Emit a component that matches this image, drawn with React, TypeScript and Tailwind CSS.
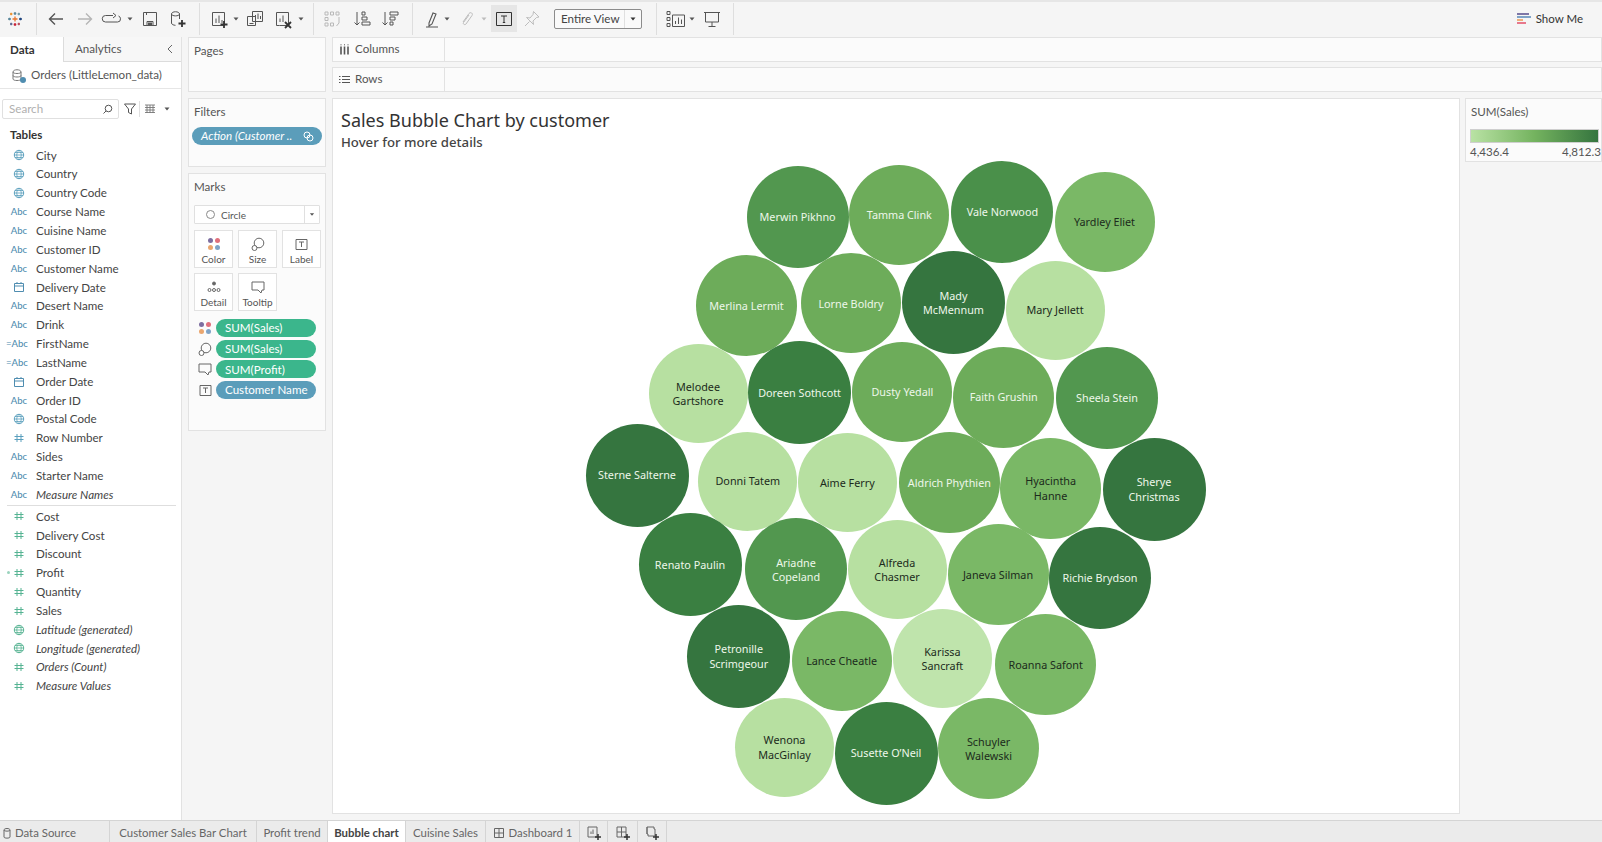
import type { ReactNode } from 'react';

const Ic = ({ w = 20, h = 20, className = '', children }: { w?: number; h?: number; className?: string; children: ReactNode }) => (
  <svg width={w} height={h} viewBox={`0 0 ${w} ${h}`} fill="none" stroke="currentColor" strokeWidth="1" className={`shrink-0 ${className}`}>
    {children}
  </svg>
);

const Caret = ({ className = '' }: { className?: string }) => (
  <svg width="8" height="20" viewBox="0 0 8 20" className={`shrink-0 ${className}`}>
    <path d="M1.5 8.5h5L4 11.5z" fill="currentColor" />
  </svg>
);

const Sep = ({ className = '' }: { className?: string }) => <div className={`h-[32px] w-px shrink-0 bg-[#dedede] ${className}`} />;

const Logo = () => (
  <svg width="16" height="16" viewBox="0 0 16 16" className="ml-[7px] shrink-0" strokeWidth="1.3" fill="none">
    <path d="M8 5.5v5M5.500 8h5" stroke="#e8762d" />
    <path d="M8 1v3M6.700 2.500h2.600" stroke="#5b879b" />
    <path d="M8 12v3M6.700 13.500h2.600" stroke="#c72035" />
    <path d="M1 8h3M2.500 6.700v2.600" stroke="#59879b" />
    <path d="M12 8h3M13.500 6.700v2.600" stroke="#1f447e" />
    <path d="M3 3h2.400M4.200 1.800v2.400" stroke="#eb912b" />
    <path d="M10.600 3H13M11.800 1.800v2.400" stroke="#7099a6" />
    <path d="M3 13h2.400M4.200 11.800v2.400" stroke="#5c6692" />
    <path d="M10.600 13H13M11.800 11.800v2.400" stroke="#b74957" />
  </svg>
);

const Toolbar = () => (
  <div className="flex h-[37px] shrink-0 items-center border-t-2 border-[#e6e6e6] bg-[#f5f5f5] pb-[2px] text-[#555]">
    <Logo />
    <Sep className="ml-[13px]" />
    <Ic className="ml-[9px]"><path d="M17 10H3.500M9 4.500 3.500 10 9 15.500" strokeWidth="1.400" /></Ic>
    <Ic className="ml-[9px] text-[#b5b5b5]"><path d="M3 10h13.500M11 4.500l5.500 5.500-5.500 5.500" strokeWidth="1.400" /></Ic>
    <Ic w={24} className="ml-[5px]"><path d="M13 6.500H5.500a3 3 0 0 0 0 6.500h12a3 3 0 0 0 3-3.200 3 3 0 0 0-2-2.800M13 4l3 2.500-3 2.500" /></Ic>
    <Caret className="ml-[2px]" />
    <Ic className="ml-[6px]"><path d="M3.500 3.500h13v13h-13zM6.500 3.500v2.500M7 16.500v-4h6v4" /><rect x="8" y="13.500" width="4" height="3" fill="currentColor" stroke="none" /></Ic>
    <Ic className="ml-[8px]"><path d="M3.500 5c0-3 8-3 8 0v5M3.500 5c0 2.500 8 2.500 8 0M3.500 5v9c0 1.500 2 2.200 4 2.300" /><path d="M14 11v7M10.500 14.500h7" strokeWidth="1.800" stroke="#333" /></Ic>
    <Sep className="ml-[11px]" />
    <Ic className="ml-[9px]"><path d="M3.500 3.500h12v13h-12zM7 14V9.500M10 14V6.500M13 14v-3" /><path d="M15 12v7M11.500 15.500h7" strokeWidth="1.800" stroke="#333" /></Ic>
    <Caret className="ml-[3px]" />
    <Ic className="ml-[5px]"><path d="M7.500 2.500h10v10h-10zM2.500 7.500h8v9h-8zM10.500 10V6M13 10V4.500M15.500 10V7M4.500 14.500h4" /></Ic>
    <Ic className="ml-[8px]"><path d="M3.500 3.500h12v13h-9M3.500 3.500v13h3M7 13V9.500M10 13V6.500" /><path d="M12 13l6 6M18 13l-6 6" strokeWidth="1.800" stroke="#333" /></Ic>
    <Caret className="ml-[4px]" />
    <Sep className="ml-[8px]" />
    <Ic className="ml-[8px] text-[#b9b9b9]"><path d="M3 3h3v3H3zM8.500 3h3v3h-3zM14 3h3v3h-3zM3 8.500h3v3H3zM3 14h3v3H3zM8.500 14h3v3h-3zM17 8v6l-2.500 3" /></Ic>
    <Ic className="ml-[10px]"><path d="M5 3v13M2.500 13.500 5 16l2.500-2.500M10 3h3v3h-3zM10 8h5v3h-5zM10 13h8v3h-8z" /></Ic>
    <Ic className="ml-[8px]"><path d="M5 3v13M2.500 13.500 5 16l2.500-2.500M10 3h8v3h-8zM10 8h5v3h-5zM10 13h3v3h-3z" /></Ic>
    <Sep className="ml-[12px]" />
    <Ic className="ml-[9px]"><path d="M7 14 11 4l3 1-4 10-3 2zM4 18h12" strokeWidth="1.100" /></Ic>
    <Caret className="ml-[1px]" />
    <Ic className="ml-[6px] text-[#bdbdbd]"><path d="M6 13 12 4.500c1.500-2 4.500 0 3 2L9 15c-1 1.500-3.500 0-2.500-1.500L12 6" /></Ic>
    <Caret className="ml-[3px] text-[#bdbdbd]" />
    <div className="ml-[3px] flex h-[27px] w-[26px] shrink-0 items-center justify-center bg-[#e6e6e6]">
      <Ic w={16} h={16} className="text-[#333]"><path d="M.5 1.500h15v13H.5zM5 5h6M8 5v6.500M6.800 11.500h2.400" /></Ic>
    </div>
    <Ic className="ml-[5px] text-[#bdbdbd]"><path d="M11.500 2.500 17 8l-2.500.5L11 12l.5 3.500-7-7L8 9l3-3.500zM7.500 12.500 3 17" /></Ic>
    <div className="ml-[12px] flex h-[20px] w-[88px] shrink-0 items-center rounded-[2px] border border-[#8c8c8c] bg-[#fafafa]">
      <span className="flex-1 whitespace-nowrap pl-[6px] text-[11.600px] leading-none text-[#444]">Entire View</span>
      <div className="flex h-full w-[17px] items-center justify-center border-l border-[#e0e0e0]"><Caret className="text-[#333]" /></div>
    </div>
    <Sep className="ml-[14px]" />
    <Ic className="ml-[9px]"><path d="M1 2.500h3v3H1zM1 8.500h3v3H1zM1 14.500h3v3H1zM6.500 6h12v11.500h-12zM9.500 15v-3M12.500 15V8.500M15.500 15v-4.500" /></Ic>
    <Caret className="ml-[2px]" />
    <Ic className="ml-[6px]"><path d="M2 3.500h16M3.500 3.500v9.500h13V3.500M10 13v4M6.500 17.500h7" /></Ic>
    <Sep className="ml-[11px]" />
    <div className="ml-auto mr-[19px] flex items-center gap-[5px]">
      <div className="flex w-[14px] flex-col gap-px">
        <div className="h-[2px] w-[12px] bg-[#7d76a6]" />
        <div className="h-[2px] w-[14px] bg-[#7fa3c7]" />
        <div className="h-[2px] w-[6px] bg-[#eeb07a]" />
        <div className="h-[2px] w-[9px] bg-[#e8788c]" />
      </div>
      <span className="text-[11.500px] leading-none text-[#333]">Show Me</span>
    </div>
  </div>
);

type Kind = 'abc' | 'eabc' | 'globe' | 'gglobe' | 'cal' | 'hash' | 'bhash' | 'phash';

const FieldIcon = ({ kind }: { kind: Kind }) => {
  if (kind === 'abc') return <span className="text-[9.500px] font-medium leading-none text-[#4f8db0]">Abc</span>;
  if (kind === 'eabc') return <span className="-ml-[4px] text-[9.500px] font-medium leading-none text-[#4f8db0]">=Abc</span>;
  if (kind === 'globe' || kind === 'gglobe')
    return (
      <Ic w={12} h={12} className={kind === 'globe' ? 'text-[#5a9fbd]' : 'text-[#55b392]'}>
        <circle cx="6" cy="6" r="4.700" /><path d="M1.300 6h9.400M2 3.500h8M2 8.500h8M6 1.300c-3 3-3 6.400 0 9.400M6 1.300c3 3 3 6.400 0 9.400" strokeWidth=".8" />
      </Ic>
    );
  if (kind === 'cal')
    return <Ic w={12} h={12} className="text-[#4f8db0]"><path d="M1.500 2.500h9v8h-9zM1.500 5h9M4 1v2M8 1v2" /></Ic>;
  const color = kind === 'bhash' ? 'text-[#5a9fbd]' : 'text-[#55b392]';
  return (
    <span className="relative flex">
      {kind === 'phash' && <span className="absolute -left-[6px] top-[4px] h-[3px] w-[3px] rounded-full bg-[#9ad3bd]" />}
      <Ic w={12} h={12} className={color}><path d="M4 2v8M8 2v8M1.500 4.500h9M1.500 7.500h9" /></Ic>
    </span>
  );
};

const dims: [string, Kind, boolean?][] = [
  ['City', 'globe'], ['Country', 'globe'], ['Country Code', 'globe'], ['Course Name', 'abc'], ['Cuisine Name', 'abc'],
  ['Customer ID', 'abc'], ['Customer Name', 'abc'], ['Delivery Date', 'cal'], ['Desert Name', 'abc'], ['Drink', 'abc'],
  ['FirstName', 'eabc'], ['LastName', 'eabc'], ['Order Date', 'cal'], ['Order ID', 'abc'], ['Postal Code', 'globe'],
  ['Row Number', 'bhash'], ['Sides', 'abc'], ['Starter Name', 'abc'], ['Measure Names', 'abc', true],
];

const measures: [string, Kind, boolean?][] = [
  ['Cost', 'hash'], ['Delivery Cost', 'hash'], ['Discount', 'hash'], ['Profit', 'phash'], ['Quantity', 'hash'], ['Sales', 'hash'],
  ['Latitude (generated)', 'gglobe', true], ['Longitude (generated)', 'gglobe', true], ['Orders (Count)', 'hash', true], ['Measure Values', 'hash', true],
];

const FieldRow = ({ name, kind, italic }: { name: string; kind: Kind; italic?: boolean }) => (
  <div className="flex h-[18.850px] items-center">
    <div className="flex w-[36px] shrink-0 justify-center pl-[2px]"><FieldIcon kind={kind} /></div>
    <span className={`text-[11.600px] leading-none text-[#444] ${italic ? 'italic' : ''}`}>{name}</span>
  </div>
);

const Sidebar = () => (
  <div className="flex w-[182px] shrink-0 flex-col border-r border-[#e2e2e2] bg-white">
    <div className="flex h-[25px] shrink-0 text-[11.600px]">
      <div className="flex w-[64px] items-center border-r border-[#dcdcdc] pl-[10px] font-bold text-[#333]">Data</div>
      <div className="flex flex-1 items-center justify-between border-b border-[#dcdcdc] bg-[#f7f7f7] pl-[11px] pr-[6px] text-[#555]">
        Analytics
        <Ic w={10} h={12} className="text-[#666]"><path d="M7 2 3 6l4 4" /></Ic>
      </div>
    </div>
    <div className="flex h-[27px] shrink-0 items-center gap-[5px] border-b border-[#e6e6e6] pl-[11px]">
      <span className="relative flex">
        <Ic w={15} h={15} className="text-[#777]"><path d="M2 4c0-3 8-3 8 0v7c0 2-8 2-8 0zM2 4c0 2 8 2 8 0M2 7.500c0 2 8 2 8 0" /></Ic>
        <span className="absolute bottom-0 right-0 h-[6px] w-[6px] rounded-full bg-[#4f8db0]" />
      </span>
      <span className="text-[11.600px] leading-none text-[#555]">Orders (LittleLemon_data)</span>
    </div>
    <div className="mt-[10px] flex h-[20px] shrink-0 items-center pl-[2px]">
      <div className="flex h-full w-[117px] items-center justify-between rounded-[2px] border border-[#e0e0e0] pl-[6px] pr-[5px]">
        <span className="text-[11.600px] leading-none text-[#b0b0b0]">Search</span>
        <Ic w={11} h={11} className="text-[#555]"><circle cx="6.500" cy="4.500" r="3.300" /><path d="M4 7 1.500 9.500" /></Ic>
      </div>
      <Ic w={12} h={12} className="ml-[5px] text-[#555]"><path d="M.5 1h11L7.500 6v5l-3-1.500V6z" /></Ic>
      <div className="ml-[3px] h-[16px] w-px bg-[#e0e0e0]" />
      <Ic w={12} h={10} className="ml-[4px] text-[#777]"><path d="M1 1h10M1 3.500h10M1 6h10M1 8.500h10M3 1v8M6 1v8M9 1v8" strokeWidth=".9" /></Ic>
      <Caret className="ml-[7px] text-[#555]" />
    </div>
    <div className="mt-[7px] flex h-[18px] shrink-0 items-center pl-[10px] text-[11.600px] font-bold leading-none text-[#333]">Tables</div>
    <div className="mt-[2px]">
      {dims.map(([n, k, i]) => <FieldRow key={n} name={n} kind={k} italic={i} />)}
    </div>
    <div className="ml-[7px] mr-[5px] mt-[1px] h-px bg-[#dedede]" />
    <div className="mt-[1px]">
      {measures.map(([n, k, i]) => <FieldRow key={n} name={n} kind={k} italic={i} />)}
    </div>
  </div>
);

const Card = ({ title, className, children }: { title: string; className: string; children?: ReactNode }) => (
  <div className={`shrink-0 border border-[#e2e2e2] bg-[#fbfbfb] ${className}`}>
    <div className="pl-[5px] pt-[5px] text-[11.600px] leading-[16px] text-[#555]">{title}</div>
    {children}
  </div>
);

const MarkBtn = ({ label, children }: { label: string; children: ReactNode }) => (
  <div className="flex h-[38px] w-[39px] flex-col items-center border border-[#e2e2e2] bg-white pt-[5px]">
    <div className="flex h-[16px] items-center">{children}</div>
    <span className="mt-[1px] text-[10px] leading-[12px] text-[#555]">{label}</span>
  </div>
);

const Dots = () => (
  <svg width="14" height="14" viewBox="0 0 14 14" className="shrink-0">
    <circle cx="3.500" cy="3.500" r="2.500" fill="#7d6ea0" /><circle cx="10.500" cy="3.500" r="2.500" fill="#e0707c" />
    <circle cx="3.500" cy="10.500" r="2.500" fill="#eaa66f" /><circle cx="10.500" cy="10.500" r="2.500" fill="#7fa3c7" />
  </svg>
);
const SizeIc = () => <Ic w={14} h={14} className="text-[#666]"><circle cx="8" cy="6" r="4.800" /><circle cx="3.500" cy="11" r="2.500" fill="#fff" /></Ic>;
const TipIc = () => <Ic w={14} h={14} className="text-[#666]"><path d="M1 2h12v8h-2l-1 3-3-3H1z" /></Ic>;
const LabelIc = () => <Ic w={13} h={13} className="text-[#666]"><path d="M1 1.500h11v10H1zM4 4h5M6.500 4v5" /></Ic>;

const Pill = ({ icon, label, color }: { icon: ReactNode; label: string; color: string }) => (
  <div className="flex h-[18px] items-center">
    <div className="flex w-[22px] shrink-0 justify-center">{icon}</div>
    <div className={`flex h-[18px] w-[100px] items-center whitespace-nowrap rounded-full pl-[9px] text-[11.600px] leading-none text-white ${color}`}>{label}</div>
  </div>
);

const Shelves = () => (
  <div className="flex w-[150px] shrink-0 flex-col gap-[6px] pl-[6px] pr-[6px]">
    <Card title="Pages" className="h-[55px]" />
    <Card title="Filters" className="h-[69px]">
      <div className="mx-[3px] mt-[7px] flex h-[18px] items-center justify-between rounded-full bg-[#5b9dba] pl-[9px] pr-[8px] text-[11.600px] italic leading-none text-white">
        <span className="whitespace-nowrap">Action (Customer ..</span>
        <Ic w={11} h={11}><circle cx="4" cy="4" r="3" /><circle cx="7" cy="7" r="3" /></Ic>
      </div>
    </Card>
    <Card title="Marks" className="h-[258px]">
      <div className="mx-[5px] mt-[10px] flex h-[19px] items-center rounded-[1px] border border-[#e0e0e0] bg-white">
        <span className="ml-[11px] h-[9px] w-[9px] rounded-full border border-[#8a8a8a]" />
        <span className="ml-[6px] flex-1 text-[10px] leading-none text-[#555]">Circle</span>
        <div className="flex h-full w-[15px] justify-center border-l border-[#e0e0e0]"><Caret className="h-full text-[#555]" /></div>
      </div>
      <div className="ml-[5px] mt-[6px] flex gap-[5px]">
        <MarkBtn label="Color"><Dots /></MarkBtn>
        <MarkBtn label="Size"><SizeIc /></MarkBtn>
        <MarkBtn label="Label"><LabelIc /></MarkBtn>
      </div>
      <div className="ml-[5px] mt-[5px] flex gap-[5px]">
        <MarkBtn label="Detail">
          <Ic w={14} h={14} className="text-[#666]"><circle cx="7" cy="3.500" r="1.500" fill="currentColor" /><circle cx="2.500" cy="10" r="1.500" /><circle cx="7" cy="10" r="1.500" /><circle cx="11.500" cy="10" r="1.500" /></Ic>
        </MarkBtn>
        <MarkBtn label="Tooltip"><TipIc /></MarkBtn>
      </div>
      <div className="ml-[5px] mt-[8px] flex flex-col gap-[2.700px]">
        <Pill icon={<Dots />} label="SUM(Sales)" color="bg-[#3bb68c]" />
        <Pill icon={<SizeIc />} label="SUM(Sales)" color="bg-[#3bb68c]" />
        <Pill icon={<TipIc />} label="SUM(Profit)" color="bg-[#3bb68c]" />
        <Pill icon={<LabelIc />} label="Customer Name" color="bg-[#5b9dba]" />
      </div>
    </Card>
  </div>
);

const c = {
  a: '#35753f', b: '#3a7f41', d: '#4a904a', e: '#52974f', f: '#6dac5a', g: '#7ab866', h: '#b7e0a1', i: '#bfe4ac',
};

// name lines, centre x, centre y, diameter, fill, dark text
const bubbles: [string[], number, number, number, string, boolean][] = [
  [['Merwin Pikhno'], 797.6, 216.8, 102, c.e, false],
  [['Tamma Clink'], 899.3, 214.7, 100, c.f, false],
  [['Vale Norwood'], 1002.4, 212, 102, c.d, false],
  [['Yardley Eliet'], 1104.5, 222, 100, c.g, true],
  [['Merlina Lermit'], 746.5, 305.5, 101, c.f, false],
  [['Lorne Boldry'], 851, 303.3, 100, c.f, false],
  [['Mady', 'McMennum'], 953.5, 302.7, 103, c.a, false],
  [['Mary Jellett'], 1055, 310, 99, c.h, true],
  [['Melodee', 'Gartshore'], 698, 393.3, 99, c.h, true],
  [['Doreen Sothcott'], 799.6, 392.7, 103, c.b, false],
  [['Dusty Yedall'], 902.4, 391.8, 100, c.f, false],
  [['Faith Grushin'], 1003.7, 397, 101, c.f, false],
  [['Sheela Stein'], 1107, 397.5, 102, c.e, false],
  [['Sterne Salterne'], 637, 475, 103, c.a, false],
  [['Donni Tatem'], 747.8, 481, 99, c.h, true],
  [['Aime Ferry'], 847.3, 482.5, 99, c.h, true],
  [['Aldrich Phythien'], 949.4, 482.5, 101, c.f, false],
  [['Hyacintha', 'Hanne'], 1050.6, 488, 101, c.g, true],
  [['Sherye', 'Christmas'], 1154, 489, 103, c.a, false],
  [['Renato Paulin'], 690, 564.3, 103, c.b, false],
  [['Ariadne', 'Copeland'], 796, 569.3, 102, c.e, false],
  [['Alfreda', 'Chasmer'], 897, 569.7, 99, c.h, true],
  [['Janeva Silman'], 998, 574.7, 101, c.g, true],
  [['Richie Brydson'], 1100, 578, 102.5, c.a, false],
  [['Petronille', 'Scrimgeour'], 738.8, 656, 103, c.a, false],
  [['Lance Cheatle'], 841.6, 661, 100, c.g, true],
  [['Karissa', 'Sancraft'], 942.4, 658.3, 99, c.i, true],
  [['Roanna Safont'], 1045.7, 664.7, 101, c.g, true],
  [['Wenona', 'MacGinlay'], 784.5, 747, 99, c.h, true],
  [['Susette O\u2019Neil'], 886, 753, 103, c.b, false],
  [['Schuyler', 'Walewski'], 988.6, 748.3, 101, c.g, true],
];

const Chart = () => (
  <div className="relative flex-1 border border-[#e2e2e2] bg-white font-['Noto_Sans',sans-serif]">
    <div className="pl-[8px] pt-[9px]">
      <div className="text-[18px] leading-[25px] text-[#333]">Sales Bubble Chart by customer</div>
      <div className="text-[13.200px] font-medium leading-[18px] text-[#444]">Hover for more details</div>
    </div>
    {bubbles.map(([lines, x, y, d, fill, dark]) => (
      <div
        key={lines[0]}
        className={`absolute flex flex-col items-center justify-center rounded-full pt-px text-center text-[10.800px] leading-[14.300px] ${dark ? 'text-[#1c2b1c]' : 'text-[#eef7ea]'}`}
        style={{ left: x - d / 2 - 333, top: y - d / 2 - 99, width: d, height: d, backgroundColor: fill }}
      >
        {lines.map((l) => <span key={l}>{l}</span>)}
      </div>
    ))}
  </div>
);

const Shelf = ({ label, icon }: { label: string; icon: ReactNode }) => (
  <div className="flex h-[25px] shrink-0 border border-[#e2e2e2] bg-[#fbfbfb]">
    <div className="flex w-[112px] shrink-0 items-center gap-[5px] border-r border-[#e2e2e2] pb-[1px] pl-[6px] text-[11.600px] leading-none text-[#555]">
      {icon}{label}
    </div>
  </div>
);

const Main = () => (
  <div className="flex min-w-0 flex-1 flex-col">
    <Shelf label="Columns" icon={<Ic w={11} h={11} className="text-[#555]"><path d="M2 2.500v8M5.500 2.500v8M9 2.500v8" strokeWidth="1.600" /><path d="M1.500 .8h1M5 .8h1M8.500 .8h1" /></Ic>} />
    <div className="h-[5px] shrink-0" />
    <Shelf label="Rows" icon={<Ic w={11} h={11} className="text-[#555]"><path d="M3 2.500h8M3 5.500h8M3 8.500h8M0 2.500h1.500M0 5.500h1.500M0 8.500h1.500" /></Ic>} />
    <div className="h-[6px] shrink-0" />
    <div className="flex min-h-0 flex-1 gap-[5px]">
      <Chart />
      <div className="h-[64px] w-[137px] shrink-0 border border-[#e2e2e2] bg-[#fbfbfb]">
        <div className="pl-[5px] pt-[5px] text-[11.600px] leading-[16px] text-[#555]">SUM(Sales)</div>
        <div className="ml-[4px] mt-[9px] h-[14px] w-[129px] border border-[#cfcfcf] bg-gradient-to-r from-[#b9e2a4] via-[#74b35f] to-[#35753f]" />
        <div className="flex justify-between pl-[4px] pt-[1px] text-[11.600px] leading-[16px] text-[#555]">
          <span>4,436.4</span>
          <span>4,812.3</span>
        </div>
      </div>
    </div>
  </div>
);

const Tab = ({ w, active, children }: { w: string; active?: boolean; children: ReactNode }) => (
  <div className={`flex h-full shrink-0 items-center justify-center gap-[4px] border-r border-[#d4d4d4] pt-[2px] text-[11.400px] leading-none ${w} ${active ? 'bg-white font-bold text-[#444]' : 'text-[#666]'}`}>
    {children}
  </div>
);

const Plus = () => <path d="M12 9v6M9 12h6" strokeWidth="1.500" stroke="#333" />;

const Tabs = () => (
  <div className="flex h-[22px] shrink-0 border-t border-[#d4d4d4] bg-[#ebebeb]">
    <Tab w="w-[110px] !justify-start pl-[1px]">
      <Ic w={12} h={12} className="text-[#666]"><path d="M3 3c0-2 6-2 6 0v7c0 1.500-6 1.500-6 0zM3 3c0 1.500 6 1.500 6 0" /></Ic>
      <span className="-ml-[2px]">Data Source</span>
    </Tab>
    <Tab w="w-[147px]">Customer Sales Bar Chart</Tab>
    <Tab w="w-[71px]">Profit trend</Tab>
    <Tab w="w-[78px]" active>Bubble chart</Tab>
    <Tab w="w-[80px]">Cuisine Sales</Tab>
    <Tab w="w-[94px]">
      <Ic w={12} h={12} className="text-[#666]"><path d="M1.500 1.500h9v9h-9zM6 1.500v9M1.500 6h9" /></Ic>
      Dashboard 1
    </Tab>
    <Tab w="w-[28px]"><Ic w={16} h={16} className="text-[#666]"><path d="M2 2h9v10H2zM5 9V6.500M7 9V4.500" /><Plus /></Ic></Tab>
    <Tab w="w-[30px]"><Ic w={16} h={16} className="text-[#666]"><path d="M2 2h9v10H2zM6.500 2v10M2 7h9" /><Plus /></Ic></Tab>
    <Tab w="w-[29px]"><Ic w={16} h={16} className="text-[#666]"><path d="M3 2h7v2h1v7H4V9H3zM3 2v7" /><Plus /></Ic></Tab>
  </div>
);

export default function App() {
  return (
    <div className="flex h-[842px] w-[1602px] flex-col overflow-hidden bg-[#f5f5f5] font-['Lato',sans-serif]">
      <Toolbar />
      <div className="flex min-h-0 flex-1">
        <Sidebar />
        <Shelves />
        <div className="flex min-w-0 flex-1 flex-col pb-[6px]"><Main /></div>
      </div>
      <Tabs />
    </div>
  );
}
